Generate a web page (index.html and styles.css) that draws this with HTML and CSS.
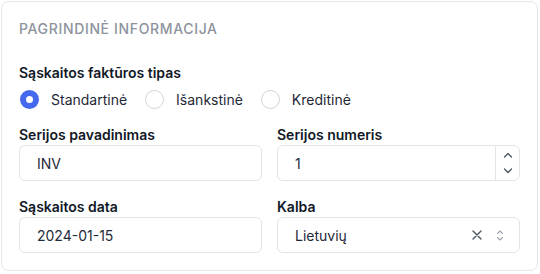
FILE: index.html
```html
<!DOCTYPE html>
<html lang="lt">
<head>
    <meta charset="UTF-8">
    <link rel="stylesheet" href="styles.css">
</head>
<body>
    <div class="card">
        <h2 class="card-title">Pagrindinė informacija</h2>

        <div class="field">
            <div class="label">Sąskaitos faktūros tipas</div>
            <div class="radios">
                <label class="radio checked"><span class="dot"></span>Standartinė</label>
                <label class="radio"><span class="dot"></span>Išankstinė</label>
                <label class="radio"><span class="dot"></span>Kreditinė</label>
            </div>
        </div>

        <div class="row">
            <div class="field">
                <div class="label">Serijos pavadinimas</div>
                <div class="input"><span class="value">INV</span></div>
            </div>
            <div class="field">
                <div class="label">Serijos numeris</div>
                <div class="input number">
                    <span class="value">1</span>
                    <div class="stepper">
                        <svg width="10" height="6" viewBox="0 0 10 6"><path d="M1.5 5L5 1.5L8.5 5" fill="none" stroke="#4b5563" stroke-width="1.3" stroke-linecap="round" stroke-linejoin="round"/></svg>
                        <svg width="10" height="6" viewBox="0 0 10 6"><path d="M1.5 1L5 4.5L8.5 1" fill="none" stroke="#4b5563" stroke-width="1.3" stroke-linecap="round" stroke-linejoin="round"/></svg>
                    </div>
                </div>
            </div>
        </div>

        <div class="row">
            <div class="field">
                <div class="label">Sąskaitos data</div>
                <div class="input"><span class="value">2024-01-15</span></div>
            </div>
            <div class="field">
                <div class="label">Kalba</div>
                <div class="input select">
                    <span class="value">Lietuvių</span>
                    <svg class="clear" width="10" height="10" viewBox="0 0 10 10"><path d="M1 1L9 9M9 1L1 9" fill="none" stroke="#4b5563" stroke-width="1.4" stroke-linecap="round"/></svg>
                    <svg class="updown" width="8" height="13" viewBox="0 0 8 13"><path d="M1.5 4.5L4 2L6.5 4.5M1.5 8.5L4 11L6.5 8.5" fill="none" stroke="#9ca3af" stroke-width="1.1" stroke-linecap="round" stroke-linejoin="round"/></svg>
                </div>
            </div>
        </div>
    </div>
</body>
</html>
```

FILE: styles.css
```css
/* bazė */
* {
    box-sizing: border-box;
}

body {
    margin: 0;
    padding: 1px;
    background: #ffffff;
    font-family: Inter, "Noto Sans", sans-serif;
    color: #111827;
}

/* kortelė */
.card {
    width: 537px;
    height: 270px;
    border: 1px solid #e5e7eb;
    border-radius: 8px;
    padding: 17px 17px 16px;
    display: flex;
    flex-direction: column;
}

.card-title {
    margin: 0 0 24px;
    font-size: 14px;
    line-height: 20px;
    font-weight: 500;
    letter-spacing: 0.65px;
    text-transform: uppercase;
    color: #8d939d;
}

.row {
    display: grid;
    grid-template-columns: 1fr 1fr;
    column-gap: 15px;
    margin-top: 16px;
}

.label {
    font-size: 14px;
    line-height: 20px;
    font-weight: 600;
    color: #111827;
}

/* radio mygtukai */
.radios {
    display: flex;
    align-items: center;
    margin-top: 6px;
    height: 20px;
}

.radio {
    display: flex;
    align-items: center;
    gap: 12px;
    font-size: 14px;
    color: #1f2937;
    margin-right: 17px;
    padding-left: 1px;
}

.radio .dot {
    width: 19px;
    height: 19px;
    border-radius: 50%;
    border: 1px solid #d1d5db;
    background: #fff;
}

.radio.checked .dot {
    border: 6px solid #4569ec;
}

/* laukai */
.input {
    height: 36px;
    border: 1px solid #e2e4e8;
    border-radius: 6px;
    display: flex;
    align-items: center;
    padding-left: 17px;
    font-size: 14px;
    color: #1f2937;
}

.input .value {
    flex: 1;
}

.number {
    padding-right: 0;
}

.stepper {
    width: 24px;
    height: 100%;
    border-left: 1px solid #e2e4e8;
    display: flex;
    flex-direction: column;
    align-items: center;
    justify-content: center;
    gap: 10px;
}

.select {
    padding-right: 15px;
}

.select .clear {
    margin-right: 14px;
}
```
